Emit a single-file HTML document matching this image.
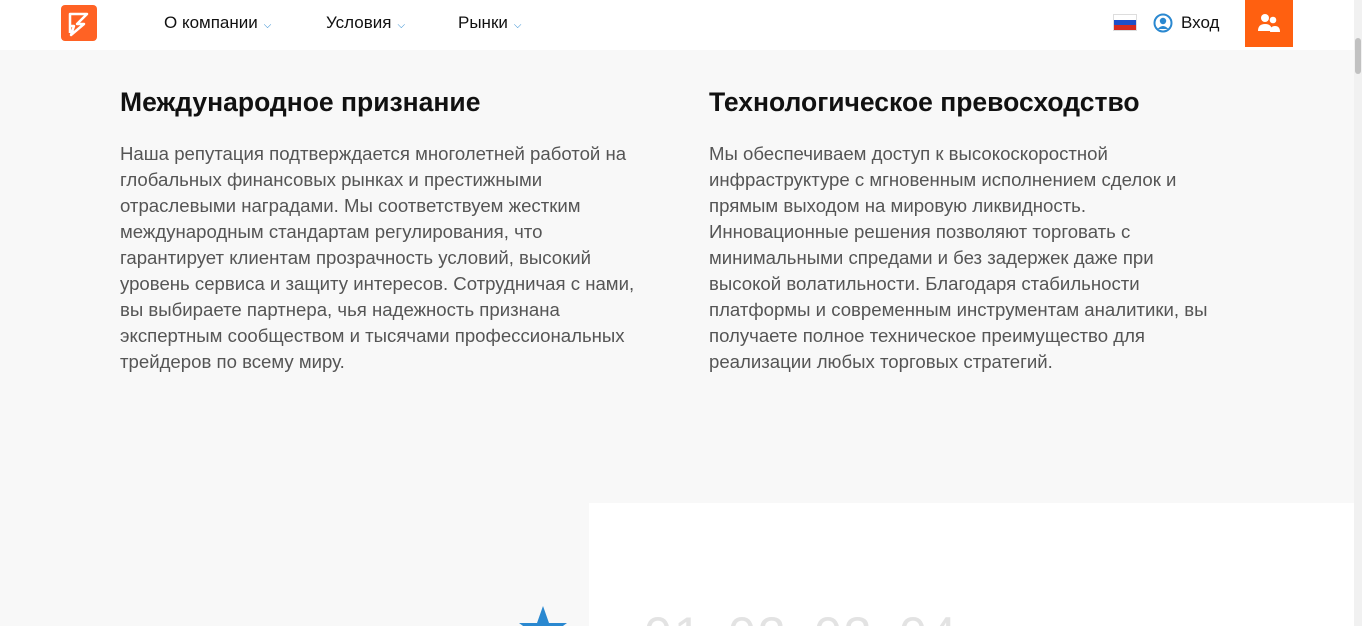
<!DOCTYPE html>
<html style="overflow:hidden;height:626px"><head><meta charset="utf-8"><style>
*{margin:0;padding:0;box-sizing:border-box}
body{width:1362px;height:626px;overflow:hidden;background:#f8f8f8;font-family:"Liberation Sans",Arial,sans-serif;position:relative}
.hdr{position:absolute;left:0;top:0;width:1354px;height:50px;background:#fff}
.logo{position:absolute;left:61px;top:5px;width:36px;height:36px;background:#ff6224;border-radius:4px}
.nav{position:absolute;top:13px;font-size:17px;color:#111}
.nav span{color:#2a88d0;font-size:10px;margin-left:6px}
.sb{position:absolute;right:0;top:0;width:8px;height:626px;background:#f1f1f1}
.sbt{position:absolute;right:1px;top:38px;width:6px;height:36px;background:#c1c1c1;border-radius:3px}
h2{position:absolute;top:87px;font-size:26.5px;font-weight:bold;color:#111;white-space:nowrap}
p{position:absolute;top:141px;font-size:18.6px;line-height:26px;color:#555;white-space:nowrap}
.panel{position:absolute;left:589px;top:503px;width:765px;height:123px;background:#fff}
.num{position:absolute;top:606px;font-size:50px;color:#e3e3e3;letter-spacing:2px}
</style></head><body>
<div class="hdr">
<div class="logo"><svg width="36" height="36" viewBox="0 0 36 36"><path d="M9 9 L26 9 L16 19 L23 19 L10 30 L13 21 L9 21 Z M9 13 L9 28" fill="none" stroke="#fff" stroke-width="2.5" stroke-linejoin="round"/></svg></div>
<div class="nav" style="left:164px">О компании<span>⌵</span></div>
<div class="nav" style="left:326px">Условия<span>⌵</span></div>
<div class="nav" style="left:458px">Рынки<span>⌵</span></div>
<div style="position:absolute;left:1113px;top:14px;width:24px;height:17px;border:1px solid #ddd">
<div style="height:5px;background:#fff"></div><div style="height:5px;background:#1e50c8"></div><div style="height:5px;background:#d52b1e"></div></div>
<svg style="position:absolute;left:1153px;top:13px" width="20" height="20" viewBox="0 0 20 20"><circle cx="10" cy="10" r="8.5" fill="none" stroke="#2a88d0" stroke-width="2"/><circle cx="10" cy="8" r="3.2" fill="#2a88d0"/><path d="M4.5 16 Q10 10 15.5 16" fill="#2a88d0"/></svg>
<div class="nav" style="left:1181px">Вход</div>
<div style="position:absolute;left:1245px;top:0;width:48px;height:47px;background:#ff6010">
<svg width="48" height="47" viewBox="0 0 48 47"><circle cx="20" cy="18" r="4" fill="#fff"/><path d="M13 31 Q13 24 20 24 Q27 24 27 31Z" fill="#fff"/><circle cx="28" cy="20" r="3.3" fill="#fff"/><path d="M25 32 Q25 26 30 26 Q35 26 35 32Z" fill="#fff"/></svg></div>
</div>
<div class="sb"></div><div class="sbt"></div>
<h2 style="left:120px">Международное признание</h2>
<h2 style="left:709px">Технологическое превосходство</h2>
<p style="left:120px">Наша репутация подтверждается многолетней работой на<br>глобальных финансовых рынках и престижными<br>отраслевыми наградами. Мы соответствуем жестким<br>международным стандартам регулирования, что<br>гарантирует клиентам прозрачность условий, высокий<br>уровень сервиса и защиту интересов. Сотрудничая с нами,<br>вы выбираете партнера, чья надежность признана<br>экспертным сообществом и тысячами профессиональных<br>трейдеров по всему миру.</p>
<p style="left:709px">Мы обеспечиваем доступ к высокоскоростной<br>инфраструктуре с мгновенным исполнением сделок и<br>прямым выходом на мировую ликвидность.<br>Инновационные решения позволяют торговать с<br>минимальными спредами и без задержек даже при<br>высокой волатильности. Благодаря стабильности<br>платформы и современным инструментам аналитики, вы<br>получаете полное техническое преимущество для<br>реализации любых торговых стратегий.</p>
<div class="panel"></div>
<svg style="position:absolute;left:519px;top:606px" width="48" height="20" viewBox="0 0 48 20"><path d="M24 0 L30 17 L48 17 L33 28 L39 46 L24 35 L9 46 L15 28 L0 17 L18 17Z" fill="#2a88d0"/></svg>
<div style="position:absolute;left:0;top:600px;width:1354px;height:26px;overflow:hidden">
<div class="num" style="left:644px;top:6px">01</div>
<div class="num" style="left:728px;top:6px">02</div>
<div class="num" style="left:814px;top:6px">03</div>
<div class="num" style="left:899px;top:6px">04</div>
</div>
</body></html>
